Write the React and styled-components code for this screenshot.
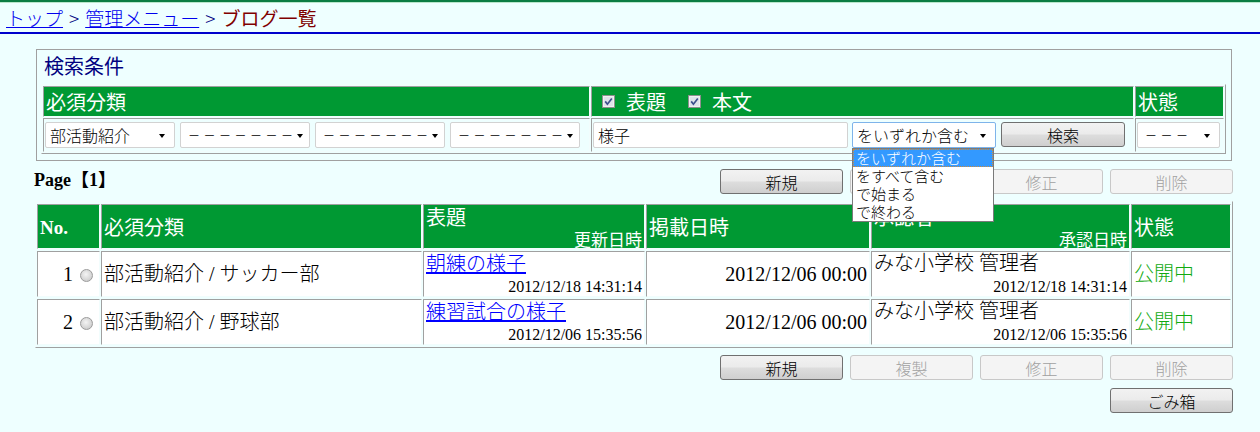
import React from 'react';
import styled, { createGlobalStyle } from 'styled-components';

const GREEN = '#009933';
const GRAY = '#a0a0a0';
const LIGHT = '#f2fdfd';

const GlobalStyle = createGlobalStyle`
    html, body {
        margin: 0;
        padding: 0;
        background: #eeffff;
        font-family: "Noto Sans CJK JP", sans-serif;
        font-weight: 300;
        color: #000;
    }
`;

const Check = () => (
    <svg width="13" height="13" viewBox="0 0 13 13">
        <rect x="0.5" y="0.5" width="12" height="12" fill="#f0f0f0" stroke="#8e8f8f" />
        <rect x="2" y="2" width="9" height="9" fill="#dfe3ea" />
        <path d="M3.2 6.4 L5.4 9.2 L9.8 3.4" fill="none" stroke="#3c4f8c" strokeWidth="1.7" />
    </svg>
);

const Radio = () => <RadioDot />;

const App = () => {
    return (
        <>
            <GlobalStyle />
            <TopBar />
            <Crumbs>
                <CrumbLink href="#">トップ</CrumbLink>
                <Sep>&gt;</Sep>
                <CrumbLink href="#">管理メニュー</CrumbLink>
                <Sep>&gt;</Sep>
                <Current>ブログ一覧</Current>
            </Crumbs>

            <Main>
                <SearchBox>
                    <SearchTitle>検索条件</SearchTitle>
                    <SearchGrid>
                        <HeadCell>必須分類</HeadCell>
                        <HeadCell>
                            <CheckLabel><Check />表題</CheckLabel>
                            <CheckLabel><Check />本文</CheckLabel>
                        </HeadCell>
                        <HeadCell>状態</HeadCell>

                        <FieldCell>
                            <Select $w={130}><span>部活動紹介</span><Arrow /></Select>
                            <Select $w={130}><Dashes>－－－－－－－</Dashes><Arrow /></Select>
                            <Select $w={130}><Dashes>－－－－－－－</Dashes><Arrow /></Select>
                            <Select $w={130}><Dashes>－－－－－－－</Dashes><Arrow /></Select>
                        </FieldCell>
                        <FieldCell>
                            <TextInput>様子</TextInput>
                            <SelectWrap>
                                <Select $w={144} $focus><span>をいずれか含む</span><Arrow /></Select>
                                <Options>
                                    <Option $active>をいずれか含む</Option>
                                    <Option>をすべて含む</Option>
                                    <Option>で始まる</Option>
                                    <Option>で終わる</Option>
                                </Options>
                            </SelectWrap>
                            <Button $w={124}>検索</Button>
                        </FieldCell>
                        <FieldCell>
                            <Select $w={83}><Dashes>－－－</Dashes><Arrow /></Select>
                        </FieldCell>
                    </SearchGrid>
                </SearchBox>

                <PageRow>
                    <PageLabel>Page【1】</PageLabel>
                    <Buttons>
                        <Button>新規</Button>
                        <Button disabled>複製</Button>
                        <Button disabled>修正</Button>
                        <Button disabled>削除</Button>
                    </Buttons>
                </PageRow>

                <List>
                    <thead>
                        <tr>
                            <Th $w={57}><NoHead>No.</NoHead></Th>
                            <Th $w={315}>必須分類</Th>
                            <Th $w={216}>
                                <Stack>
                                    <span>表題</span>
                                    <Sub>更新日時</Sub>
                                </Stack>
                            </Th>
                            <Th $w={218}>掲載日時</Th>
                            <Th $w={253}>
                                <Stack>
                                    <span>承認者</span>
                                    <Sub>承認日時</Sub>
                                </Stack>
                            </Th>
                            <Th $w={94}>状態</Th>
                        </tr>
                    </thead>
                    <tbody>
                        {rows.map((row) => (
                            <tr key={row.no}>
                                <Td $align="right">{row.no} <Radio /></Td>
                                <Td>{row.category}</Td>
                                <Td>
                                    <Stack>
                                        <TitleLink href="#">{row.title}</TitleLink>
                                        <Small>{row.updated}</Small>
                                    </Stack>
                                </Td>
                                <Td $align="right">{row.published}</Td>
                                <Td>
                                    <Stack>
                                        <span>{row.approver}</span>
                                        <Small>{row.approved}</Small>
                                    </Stack>
                                </Td>
                                <Td><Status>公開中</Status></Td>
                            </tr>
                        ))}
                    </tbody>
                </List>

                <Buttons $top={7}>
                    <Button>新規</Button>
                    <Button disabled>複製</Button>
                    <Button disabled>修正</Button>
                    <Button disabled>削除</Button>
                </Buttons>
                <Buttons $top={8}>
                    <Button>ごみ箱</Button>
                </Buttons>
            </Main>
        </>
    );
};

const rows = [
    {
        no: 1,
        category: '部活動紹介 / サッカー部',
        title: '朝練の様子',
        updated: '2012/12/18 14:31:14',
        published: '2012/12/06 00:00',
        approver: 'みな小学校 管理者',
        approved: '2012/12/18 14:31:14',
    },
    {
        no: 2,
        category: '部活動紹介 / 野球部',
        title: '練習試合の様子',
        updated: '2012/12/06 15:35:56',
        published: '2012/12/06 00:00',
        approver: 'みな小学校 管理者',
        approved: '2012/12/06 15:35:56',
    },
];

export default App;

const TopBar = styled.div`
    height: 2px;
    background: #0b7d43;
    border-bottom: 1px solid #b9e6cb;
`;

const Crumbs = styled.nav`
    height: 28px;
    padding: 1px 0 0 6px;
    border-bottom: 2px solid #0000cc;
    font-size: 19px;
    line-height: 27px;
    display: flex;
    gap: 6px;
`;

const CrumbLink = styled.a`
    color: #0000ee;
    text-decoration: underline;
`;

const Sep = styled.span`
    color: #000080;
`;

const Current = styled.span`
    color: #800000;
    font-weight: 400;
`;

const Main = styled.main`
    padding: 0 27px 0 34px;
`;

const SearchBox = styled.section`
    margin: 15px 1px 0 2px;
    border: 1px solid ${GRAY};
    padding: 4px 4px 6px 4px;
`;

const SearchTitle = styled.h2`
    margin: 0 0 6px 3px;
    font-size: 20px;
    line-height: 24px;
    font-weight: 400;
    color: #000080;
`;

const SearchGrid = styled.div`
    display: grid;
    grid-template-columns: 547px 543px 89px;
    grid-template-rows: 31px 34px;
    gap: 1px;
    padding: 1px;
    width: max-content;
    border: 1px solid;
    border-color: ${LIGHT} ${GRAY} ${GRAY} ${LIGHT};
`;

const HeadCell = styled.div`
    box-sizing: border-box;
    border: 1px solid;
    border-color: ${GRAY} ${LIGHT} ${LIGHT} ${GRAY};
    background: ${GREEN};
    background-clip: padding-box;
    color: #fff;
    font-size: 20px;
    font-weight: 400;
    line-height: 26px;
    padding: 0 2px;
    display: flex;
    align-items: center;
    gap: 22px;
`;

const CheckLabel = styled.label`
    display: flex;
    align-items: center;
    gap: 11px;
    padding-left: 8px;

    & + & {
        padding-left: 0;
    }
`;

const FieldCell = styled.div`
    box-sizing: border-box;
    border: 1px solid;
    border-color: ${GRAY} ${LIGHT} ${LIGHT} ${GRAY};
    padding: 3px 1px;
    display: flex;
    align-items: flex-start;
    gap: 5px;

    &:first-of-type {
        padding-left: 2px;
    }
`;

const Select = styled.div`
    box-sizing: border-box;
    width: ${(p) => p.$w}px;
    height: 26px;
    flex: none;
    background: #fff;
    border: 1px solid ${(p) => (p.$focus ? '#7eb4ea' : '#d2d2d2')};
    border-radius: 2px;
    padding: 0 9px 0 4px;
    display: flex;
    align-items: center;
    justify-content: space-between;
    font-size: 16px;
    line-height: 24px;
    white-space: nowrap;
`;

const Dashes = styled.span`
    font-size: 12px;
    font-weight: 400;
    letter-spacing: 3.5px;
    padding-left: 3px;
`;

const Arrow = styled.i`
    flex: none;
    width: 0;
    height: 0;
    margin-top: 2px;
    border-left: 3.5px solid transparent;
    border-right: 3.5px solid transparent;
    border-top: 4px solid #000;
`;

const TextInput = styled.div`
    box-sizing: border-box;
    width: 255px;
    height: 26px;
    flex: none;
    background: #fff;
    border: 1px solid #d2d2d2;
    border-radius: 2px;
    padding: 0 4px;
    font-size: 16px;
    line-height: 24px;
    margin-right: -1px;
`;

const SelectWrap = styled.div`
    position: relative;
`;

const Options = styled.ul`
    position: absolute;
    top: 26px;
    left: 0;
    z-index: 10;
    box-sizing: border-box;
    width: 142px;
    margin: 0;
    padding: 0;
    list-style: none;
    background: #fff;
    border: 1px solid #7a7a7a;
`;

const Option = styled.li`
    height: 18px;
    padding: 0 3px;
    font-size: 15px;
    line-height: 18px;
    white-space: nowrap;
    color: ${(p) => (p.$active ? '#fff' : '#000')};
    background: ${(p) => (p.$active ? '#3399ff' : '#fff')};
    outline: ${(p) => (p.$active ? '1px dotted #d08a3a' : 'none')};
    outline-offset: -1px;
`;

const Button = styled.button`
    box-sizing: border-box;
    width: ${(p) => p.$w || 123}px;
    height: 25px;
    flex: none;
    margin: 0;
    padding: 0;
    border: 1px solid #707070;
    border-radius: 3px;
    background: linear-gradient(#f2f2f2 0%, #ebebeb 48%, #dddddd 52%, #cfcfcf 100%);
    font-family: "Noto Sans CJK JP", sans-serif;
    font-weight: 300;
    font-size: 16px;
    line-height: 22px;
    color: #000;

    &:disabled {
        border-color: #c8c8c8;
        background: #f4f4f4;
        color: #a0a0a0;
    }
`;

const PageRow = styled.div`
    display: flex;
    justify-content: space-between;
    align-items: center;
    margin: 8px 0 7px;
`;

const PageLabel = styled.span`
    font-family: "Liberation Serif", "Noto Sans CJK JP", serif;
    font-weight: bold;
    font-size: 18px;
    line-height: 25px;
    margin-top: -2px;
`;

const Buttons = styled.div`
    display: flex;
    justify-content: flex-end;
    gap: 7px;
    margin-top: ${(p) => p.$top || 0}px;
`;

const List = styled.table`
    border-collapse: separate;
    border-spacing: 1px 2px;
    border: 1px solid;
    border-color: ${LIGHT} ${GRAY} ${GRAY} ${LIGHT};
    margin-left: 1px;
    font-family: "Liberation Serif", "Noto Sans CJK JP", serif;
`;

const Th = styled.th`
    width: ${(p) => p.$w}px;
    height: 43px;
    padding: 0 2px;
    border: 1px solid;
    border-color: ${GRAY} ${LIGHT} ${LIGHT} ${GRAY};
    background: ${GREEN};
    color: #fff;
    font-family: "Noto Sans CJK JP", sans-serif;
    font-weight: 400;
    font-size: 20px;
    line-height: 24px;
    text-align: left;
    vertical-align: middle;
`;

const NoHead = styled.span`
    font-family: "Liberation Serif", serif;
    font-weight: bold;
    font-size: 19px;
`;

const Stack = styled.div`
    height: 100%;
    display: flex;
    flex-direction: column;
    justify-content: space-between;
    align-items: flex-start;
`;

const Sub = styled.span`
    align-self: flex-end;
    font-size: 17px;
    line-height: 19px;
`;

const Td = styled.td`
    height: 44px;
    padding: 0 2px;
    border: 1px solid;
    border-color: ${GRAY} ${LIGHT} ${LIGHT} ${GRAY};
    background: #fff;
    font-size: 20px;
    line-height: 23px;
    text-align: ${(p) => p.$align || 'left'};
    vertical-align: middle;
    white-space: nowrap;
`;

const TitleLink = styled.a`
    color: #0000ff;
    text-decoration: underline;
    font-family: "Noto Sans CJK JP", sans-serif;
    line-height: 22px;
`;

const Small = styled.span`
    align-self: flex-end;
    font-size: 16px;
    line-height: 19px;
`;

const Status = styled.span`
    color: #11aa11;
`;

const RadioDot = styled.span`
    display: inline-block;
    box-sizing: border-box;
    width: 13px;
    height: 13px;
    margin: 0 4px 0 2px;
    vertical-align: -1px;
    border-radius: 50%;
    border: 1px solid #9b9b9b;
    background: radial-gradient(circle at 45% 40%, #f4f4f4 0%, #d6d6d6 60%, #c2c2c2 100%);
`;
